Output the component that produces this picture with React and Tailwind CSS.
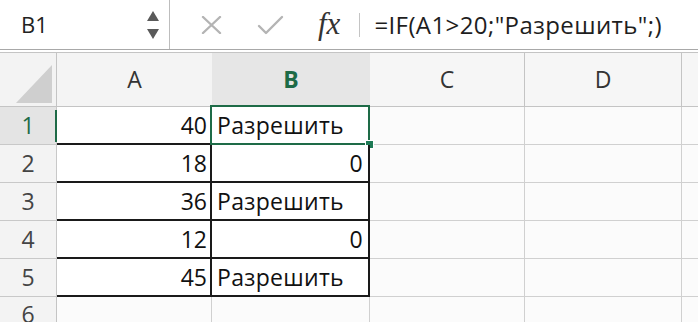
import { useState } from "react";

const rows = [
    { a: "40", b: "Разрешить" },
    { a: "18", b: "0" },
    { a: "36", b: "Разрешить" },
    { a: "12", b: "0" },
    { a: "45", b: "Разрешить" },
];

const font = { fontFamily: '"Open Sans", "Liberation Sans", sans-serif' };

const FormulaBar = () => (
    <div className="flex h-[50px] items-center bg-white border-b border-[#a8a8a8]">
        <div className="flex h-full w-[170px] items-center justify-between border-r border-[#bdbdbd] pl-[21px] pr-[10px]">
            <span className="text-[22px] text-[#222]">B1</span>
            <div className="flex flex-col items-center gap-[8px]">
                <svg width="12" height="10" viewBox="0 0 12 10"><path d="M6 0 L12 10 L0 10 Z" fill="#5a5a5a" /></svg>
                <svg width="12" height="10" viewBox="0 0 12 10"><path d="M0 0 L12 0 L6 10 Z" fill="#5a5a5a" /></svg>
            </div>
        </div>
        <div className="ml-[31px] flex items-center">
            <svg width="21" height="18" viewBox="0 0 21 18">
                <path d="M2 1 L19 17 M19 1 L2 17" stroke="#b4b4b4" strokeWidth="2.4" strokeLinecap="round" />
            </svg>
        </div>
        <div className="ml-[35px] flex items-center">
            <svg width="27" height="20" viewBox="0 0 27 20">
                <path d="M2 11 L9 18 L25 2" stroke="#b4b4b4" strokeWidth="2.4" fill="none" strokeLinecap="round" strokeLinejoin="round" />
            </svg>
        </div>
        <span className="ml-[34px] text-[31px] italic text-[#333]" style={{ fontFamily: '"Liberation Serif", serif' }}>fx</span>
        <div className="ml-[19px] h-[24px] w-px bg-[#c4c4c4]" />
        <span className="ml-[14px] text-[24px] tracking-[0.4px] text-[#1e1e1e]">=IF(A1&gt;20;"Разрешить";)</span>
    </div>
);

const App = () => {
    const [selected] = useState(0);

    return (
        <div className="w-[698px] h-[322px] overflow-hidden bg-[#fbfbfb]" style={font}>
            <FormulaBar />
            <div className="h-[2px] bg-white" />
            <div className="grid grid-cols-[57px_155px_158px_155px_157px_16px] grid-rows-[55px_38px_38px_38px_38px_38px_38px]">
                {/* header row */}
                <div className="relative border-t border-b border-r border-[#c4c4c4] bg-[#f3f3f3]">
                    <svg className="absolute left-[16px] top-[12px]" width="36" height="38" viewBox="0 0 36 38">
                        <path d="M0 38 L36 0 L36 38 Z" fill="#cfcfcf" />
                    </svg>
                </div>
                <div className="flex items-center justify-center border-t border-b border-[#c4c4c4] bg-[#f4f4f4] text-[23px] text-[#333]">A</div>
                <div className="flex items-center justify-center border-t border-b-2 border-t-[#c4c4c4] border-b-[#1e6b47] bg-[#e6e6e6] text-[23px] font-bold text-[#1e6b47]">B</div>
                <div className="flex items-center justify-center border-t border-b border-r border-[#c4c4c4] bg-[#f6f6f6] text-[23px] text-[#333]">C</div>
                <div className="flex items-center justify-center border-t border-b border-r border-[#c4c4c4] bg-[#f6f6f6] text-[23px] text-[#333]">D</div>
                <div className="border-t border-b border-[#c4c4c4] bg-[#f6f6f6]" />

                {rows.map((r, i) => (
                    <Row key={i} index={i} row={r} selected={selected === i} />
                ))}

                {/* row 6 */}
                <div className="flex items-start justify-center border-r border-[#c4c4c4] bg-[#f3f3f3] pt-[3px] text-[23px] leading-[28px] text-[#444]">6</div>
                <div className="border-r border-[#d0d0d0]" />
                <div className="border-r border-[#d0d0d0]" />
                <div className="border-r border-[#d0d0d0]" />
                <div className="border-r border-[#d0d0d0]" />
                <div />
            </div>
        </div>
    );
};

const Row = ({ index, row, selected }) => {
    const isText = row.b !== "0";
    return (
        <>
            <div className={`relative flex items-center justify-center border-b border-r border-[#c8c8c8] text-[23px] ${selected ? "bg-[#e4e4e4] text-[#1e6b47]" : "bg-[#f3f3f3] text-[#444]"}`}>
                {index + 1}
                {selected && <div className="absolute right-[-1px] top-[3px] bottom-[2px] w-[2px] bg-[#1e6b47]" />}
            </div>
            <div className="flex items-center justify-end border-b-2 border-r-2 border-[#1a1a1a] bg-white pr-[3px] text-[23px] text-[#111]">
                {row.a}
            </div>
            <div className={`relative flex items-center border-b-2 border-r-2 border-[#1a1a1a] bg-white text-[23px] tracking-[0.3px] text-[#111] ${isText ? "justify-start pl-[5px]" : "justify-end pr-[5px]"}`}>
                {row.b}
                {selected && (
                    <>
                        <div className="absolute left-[-2px] top-[-2px] right-[-2px] bottom-[-2px] border-2 border-[#1e6b47]" />
                        <div className="absolute right-[-6px] bottom-[-6px] h-[9px] w-[9px] border border-white bg-[#1e7a55]" />
                    </>
                )}
            </div>
            <div className="border-b border-r border-[#d0d0d0]" />
            <div className="border-b border-r border-[#d0d0d0]" />
            <div className="border-b border-[#d0d0d0]" />
        </>
    );
};

export default App;
